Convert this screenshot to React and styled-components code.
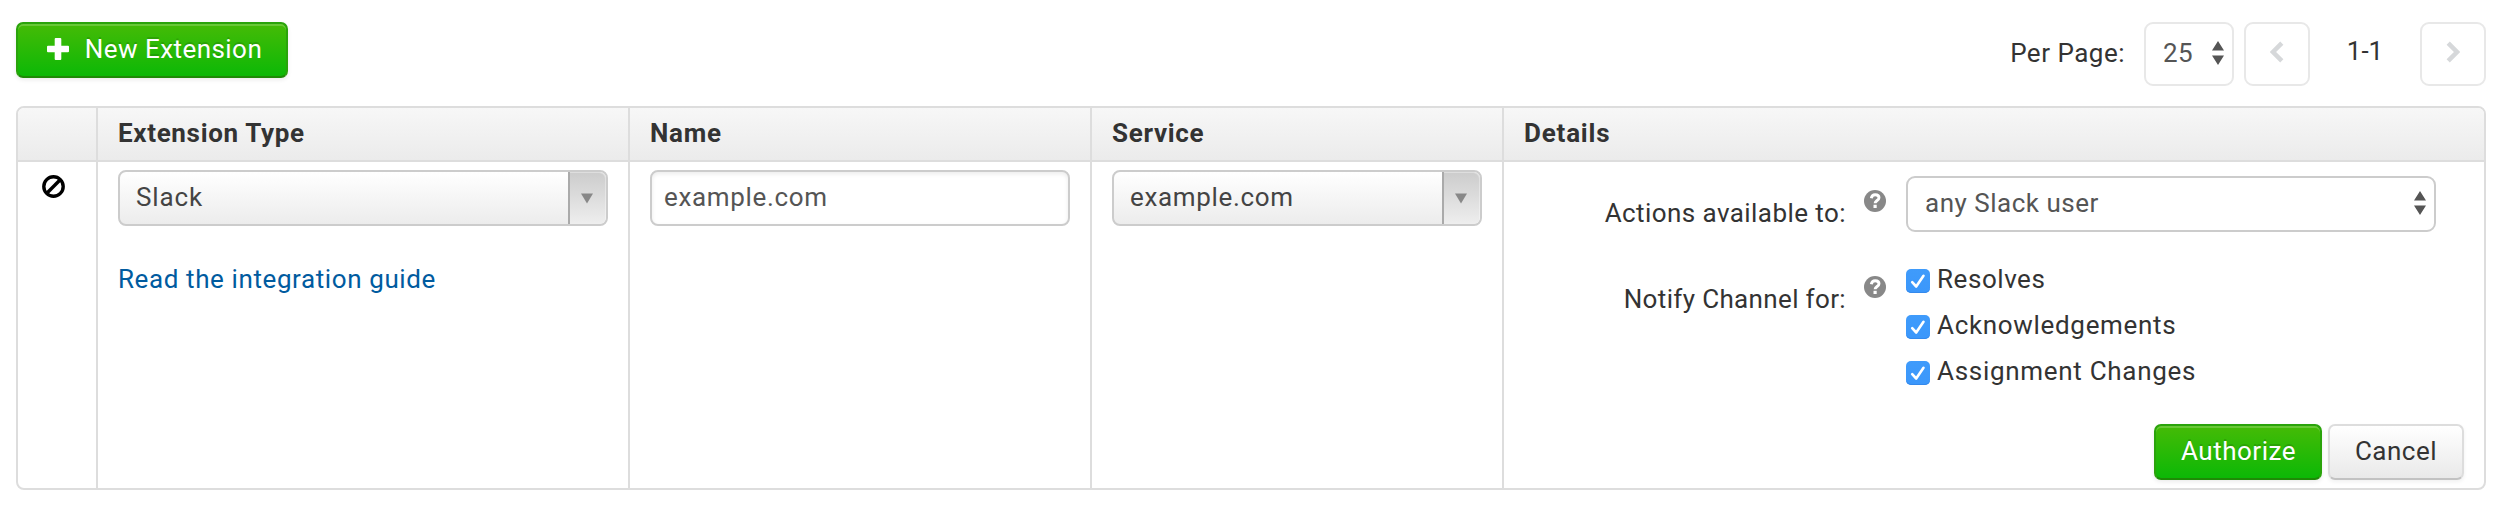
import React from "react";
import styled, { createGlobalStyle, css } from "styled-components";

const GlobalStyle = createGlobalStyle`
  *, *::before, *::after { box-sizing: border-box; }
  body {
    margin: 0;
    background: #fff;
    color: #333;
    font: 400 26px/32px Roboto, "Liberation Sans", sans-serif;
  }
  svg { display: block; flex: none; }
`;

const Page = styled.main`
  width: 2506px;
  height: 506px;
  padding: 22px 20px 16px 16px;
  overflow: hidden;
`;

const Text = styled.span`
  white-space: nowrap;
  letter-spacing: ${(p) => p.$track || 0}px;
`;

const Toolbar = styled.header`
  display: flex;
  justify-content: space-between;
  align-items: flex-start;
  height: 84px;
`;

const Button = styled.button`
  display: flex;
  justify-content: center;
  align-items: center;
  width: ${(p) => p.$width}px;
  height: 56px;
  padding: 0 0 2px ${(p) => p.$indent || 0}px;
  border: 2px solid #ddd;
  border-bottom-color: #c2c2c2;
  border-radius: 7px;
  background: linear-gradient(#fff, #e9e9e9);
  box-shadow: 0 2px 4px rgba(0, 0, 0, 0.06);
  color: #333;
  font: inherit;
  ${(p) =>
    p.$primary &&
    css`
      border-color: #2aa30b;
      border-bottom-color: #1e8a06;
      background: linear-gradient(#45bb06, #0cb806);
      box-shadow: inset 0 2px 0 rgba(255, 255, 255, 0.2), 0 2px 4px rgba(0, 0, 0, 0.08);
      color: #fff;
      text-shadow: 0 -2px 0 rgba(0, 0, 0, 0.14);
    `}
`;

const PlusIcon = styled.svg`
  margin-right: 16px;
`;

const Pager = styled.nav`
  display: flex;
  align-items: center;
  height: 64px;
`;

const PagerLabel = styled.label`
  margin-right: 19px;
  padding-bottom: 2px;
`;

const PageRange = styled.div`
  width: 110px;
  padding-bottom: 7px;
  text-align: center;
`;

const PagerButton = styled.button`
  display: flex;
  justify-content: center;
  align-items: center;
  width: 66px;
  height: 64px;
  padding: 0 0 4px;
  border: 2px solid #e8e8e8;
  border-radius: 9px;
  background: #fff;
`;

const NativeSelect = styled.div`
  display: flex;
  justify-content: space-between;
  align-items: center;
  width: ${(p) => p.$width}px;
  height: ${(p) => p.$height || 56}px;
  margin-right: ${(p) => p.$gap || 0}px;
  padding: 0 8px 2px 17px;
  border: 2px solid ${(p) => p.$border || "#ccc"};
  border-radius: 9px;
  background: #fff;
  color: #555;
`;

const Table = styled.section`
  display: grid;
  grid-template-columns: 80px 532px 462px 412px 1fr;
  grid-template-rows: 54px 326px;
  border: 2px solid #ddd;
  border-radius: 8px;
  overflow: hidden;
`;

const HeadCell = styled.div`
  display: flex;
  align-items: center;
  padding: 0 20px 2px;
  border-right: 2px solid #ddd;
  border-bottom: 2px solid #ddd;
  background: linear-gradient(#f7f7f7, #ebebeb);
  font-weight: 700;
  &:nth-child(5) { border-right: 0; padding-left: 20px; }
`;

const Cell = styled.div`
  padding: 8px 20px;
  border-right: 2px solid #ddd;
`;

const IconCell = styled(Cell)`
  padding: 13px 24px;
`;

const Dropdown = styled.div`
  display: flex;
  width: 100%;
  height: 56px;
  border: 2px solid #ccc;
  border-radius: 8px;
  overflow: hidden;
  background: linear-gradient(#fff, #ececec);
  color: #444;
`;

const DropdownValue = styled.div`
  display: flex;
  flex: 1;
  align-items: center;
  padding: 0 0 2px 16px;
`;

const DropdownArrow = styled.div`
  display: flex;
  justify-content: center;
  align-items: center;
  width: 38px;
  padding-right: 2px;
  border-left: 2px solid #aaa;
  border-radius: 0 6px 6px 0;
  background: linear-gradient(#ccc, #eee);
  box-shadow: inset -1px 1px 0 rgba(255, 255, 255, 0.35);
`;

const TextInput = styled.div`
  display: flex;
  align-items: center;
  height: 56px;
  padding: 0 12px 2px;
  border: 2px solid #ccc;
  border-radius: 8px;
  box-shadow: inset 0 2px 4px rgba(0, 0, 0, 0.08);
  color: #555;
`;

const GuideLink = styled.a`
  display: block;
  margin-top: 37px;
  color: #005b9f;
`;

const Details = styled.div`
  display: flex;
  flex-direction: column;
  padding: 14px 20px 8px;
`;

const Field = styled.div`
  display: flex;
  align-items: flex-start;
  height: ${(p) => p.$height}px;
`;

const FieldLabel = styled.div`
  width: 322px;
  margin-right: 18px;
  padding-top: ${(p) => p.$top}px;
  text-align: right;
`;

const Help = styled.svg`
  margin-top: ${(p) => p.$top}px;
  margin-right: 20px;
`;

const CheckList = styled.div`
  display: flex;
  flex-direction: column;
  gap: 14px;
  padding-top: 1px;
`;

const CheckRow = styled.label`
  display: flex;
  height: 32px;
`;

const Checkbox = styled.span`
  width: 24px;
  height: 24px;
  margin: 6px 7px 0 0;
  border-radius: 5px;
  background: linear-gradient(#3f9bfb, #3b97fb);
  box-shadow: inset 0 -1px 0 #3489ec;
`;

const Actions = styled.div`
  display: flex;
  justify-content: flex-end;
  gap: 6px;
  margin-top: auto;
`;

const Sorter = () => (
  <svg width="12" height="24" viewBox="0 0 12 24" fill="#555">
    <path d="M6 0 12 9.5H0Z M0 14.5H12L6 24Z" />
  </svg>
);

const Caret = () => (
  <svg width="12" height="11" viewBox="0 0 12 11" fill="#888">
    <path d="M0 0.500H12L6 10.5Z" />
  </svg>
);

const Chevron = ({ right }) => (
  <svg width="14" height="22" viewBox="0 0 14 22" fill="none" stroke="#d6d8da" strokeWidth="4.5">
    <path d={right ? "M2.200 2.200 11 11 2.200 19.800" : "M11.800 2.200 3 11 11.800 19.800"} />
  </svg>
);

const HelpIcon = ({ top }) => (
  <Help $top={top} width="22" height="22" viewBox="0 0 22 22">
    <circle cx="11" cy="11" r="11" fill="#888" />
    <path d="M7.300 8.200C7.700 5.700 9.100 4.700 11.200 4.700c2.200 0 3.800 1.200 3.800 3.100 0 2.700-3.900 2.800-3.900 5.500" fill="none" stroke="#fff" strokeWidth="2.900" />
    <path d="M9.500 14.800h3.200v3.200H9.500z" fill="#fff" />
  </Help>
);

const Dropbox = ({ value, track }) => (
  <Dropdown>
    <DropdownValue><Text $track={track}>{value}</Text></DropdownValue>
    <DropdownArrow><Caret /></DropdownArrow>
  </Dropdown>
);

const columns = [["", 0], ["Extension Type", 0.67], ["Name", 0.7], ["Service", 0.7], ["Details", 0.8]];
const events = [["Resolves", 0.55], ["Acknowledgements", 0.68], ["Assignment Changes", 0.7]];

export default function App() {
  return (
    <Page>
      <GlobalStyle />
      <Toolbar>
        <Button $primary $width={272} $indent={5}>
          <PlusIcon width="22" height="22" viewBox="0 0 22 22" fill="#fff">
            <path d="M8.700 0h4.600a1 1 0 0 1 1 1v6.700H21a1 1 0 0 1 1 1v4.600a1 1 0 0 1-1 1h-6.700V21a1 1 0 0 1-1 1H8.700a1 1 0 0 1-1-1v-6.700H1a1 1 0 0 1-1-1V8.700a1 1 0 0 1 1-1h6.700V1a1 1 0 0 1 1-1z" />
          </PlusIcon>
          <Text $track={0.45}>New Extension</Text>
        </Button>
        <Pager>
          <PagerLabel><Text $track={0.5}>Per Page:</Text></PagerLabel>
          <NativeSelect $width={90} $height={64} $gap={10} $border="#e8e8e8">
            <Text $track={0.5}>25</Text>
            <Sorter />
          </NativeSelect>
          <PagerButton><Chevron /></PagerButton>
          <PageRange><Text>1-1</Text></PageRange>
          <PagerButton><Chevron right /></PagerButton>
        </Pager>
      </Toolbar>
      <Table>
        {columns.map(([name, track]) => (
          <HeadCell key={name}><Text $track={track}>{name}</Text></HeadCell>
        ))}
        <IconCell>
          <svg width="23" height="23" viewBox="0 0 23 23" fill="none" stroke="#000" strokeWidth="3.400">
            <circle cx="11.5" cy="11.5" r="9.700" />
            <path d="M4.800 18.200 18.200 4.800" />
          </svg>
        </IconCell>
        <Cell>
          <Dropbox value="Slack" track={0.9} />
          <GuideLink><Text $track={0.6}>Read the integration guide</Text></GuideLink>
        </Cell>
        <Cell>
          <TextInput><Text $track={0.65}>example.com</Text></TextInput>
        </Cell>
        <Cell>
          <Dropbox value="example.com" track={0.65} />
        </Cell>
        <Details>
          <Field $height={86}>
            <FieldLabel $top={21}><Text $track={0.43}>Actions available to:</Text></FieldLabel>
            <HelpIcon top={14} />
            <NativeSelect $width={530}>
              <Text $track={0.5}>any Slack user</Text>
              <Sorter />
            </NativeSelect>
          </Field>
          <Field $height={130}>
            <FieldLabel $top={21}><Text $track={0.35}>Notify Channel for:</Text></FieldLabel>
            <HelpIcon top={14} />
            <CheckList>
              {events.map(([name, track]) => (
                <CheckRow key={name}>
                  <Checkbox>
                    <svg width="24" height="24" viewBox="0 0 24 24" fill="none" stroke="#fff" strokeWidth="2.600" strokeLinecap="round" strokeLinejoin="round">
                      <path d="M6.200 13.200 10.200 17.500 17.500 6.800" />
                    </svg>
                  </Checkbox>
                  <Text $track={track}>{name}</Text>
                </CheckRow>
              ))}
            </CheckList>
          </Field>
          <Actions>
            <Button $primary $width={168} $indent={1}><Text $track={0.5}>Authorize</Text></Button>
            <Button $width={136}><Text $track={0.5}>Cancel</Text></Button>
          </Actions>
        </Details>
      </Table>
    </Page>
  );
}
